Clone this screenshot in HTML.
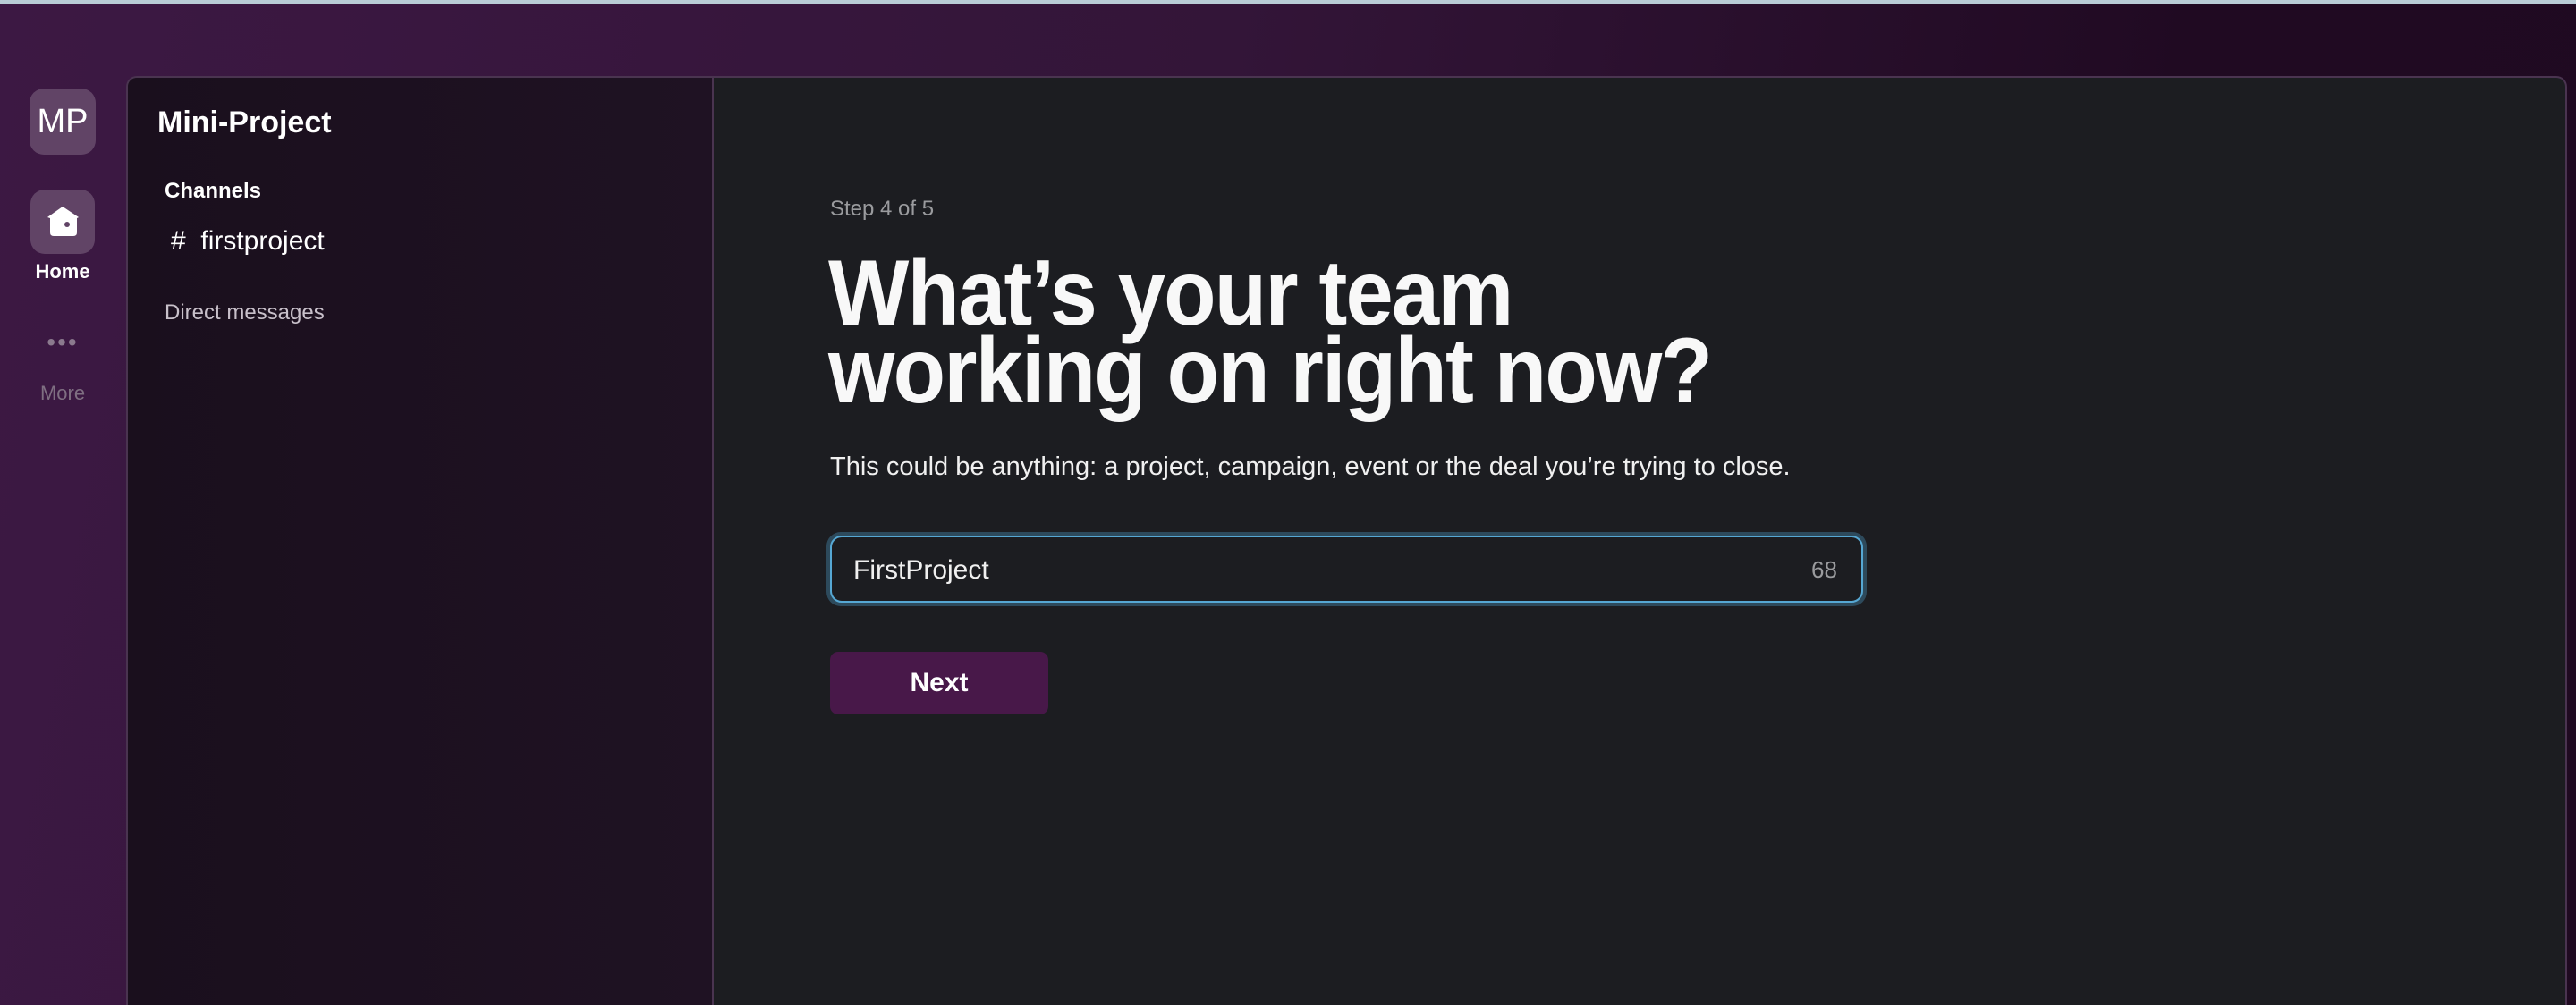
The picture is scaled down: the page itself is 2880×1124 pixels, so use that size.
<!DOCTYPE html>
<html><head><meta charset="utf-8"><style>
*{margin:0;padding:0;box-sizing:border-box}
html,body{width:2880px;height:1124px;overflow:hidden}
body{position:relative;font-family:"Liberation Sans",sans-serif;background:linear-gradient(100deg,#3c1843 0%,#331538 45%,#200a22 80%,#1f0a21 100%);}
.topline{position:absolute;left:0;top:0;width:2880px;height:4px;background:#b9ccd6}
.panel{position:absolute;left:141px;top:85px;width:2729px;height:1039px;border:2px solid #4a3450;border-bottom:none;border-radius:12px 12px 0 0;overflow:hidden;background:#1c1d21}
.side{position:absolute;left:0;top:0;width:655px;height:100%;background:linear-gradient(90deg,#1a0f1d,#1f1223);border-right:2px solid #4a3450}
.ws{position:absolute;left:33px;top:99px;width:74px;height:74px;border-radius:16px;background:#614466;color:#fff;font-size:38px;text-align:center;line-height:74px}
.home{position:absolute;left:34px;top:212px;width:72px;height:72px;border-radius:16px;background:#614466}
.lbl{position:absolute;width:140px;left:0;text-align:center;font-size:22px}
.t{position:absolute;white-space:nowrap}
</style></head><body>
<div class="topline"></div>
<div class="ws">MP</div>
<div class="home"><svg width="72" height="72" viewBox="0 0 72 72"><path d="M36 19 L54 31 L52 32 L52 48 Q52 52 48 52 L26 52 Q22 52 22 48 L22 32 L19 31 Z" fill="#fff"/><circle cx="41" cy="39" r="3" fill="#614466"/></svg></div>
<div class="lbl" style="top:291px;color:#fff;font-weight:bold">Home</div>
<div class="lbl" style="top:367px;color:#8b7a8e;font-size:28px;letter-spacing:2px">•••</div>
<div class="lbl" style="top:427px;color:#7f6f82">More</div>
<div class="panel">
 <div class="side">
  <div class="t" style="left:33px;top:31px;font-size:34px;font-weight:bold;color:#fff">Mini-Project</div>
  <div class="t" style="left:41px;top:113px;font-size:24px;font-weight:bold;color:#fff">Channels</div>
  <div class="t" style="left:48px;top:166px;font-size:30px;color:#fff">#&nbsp; firstproject</div>
  <div class="t" style="left:41px;top:249px;font-size:24px;color:#c8c0ca">Direct messages</div>
 </div>
 <div class="t" style="left:785px;top:133px;font-size:24px;color:#9a9b9e">Step 4 of 5</div>
 <div class="t" style="left:783px;top:198px;font-size:104px;font-weight:bold;color:#f8f8f8;line-height:87px;letter-spacing:-2px;transform:scaleX(0.92);transform-origin:left top">What’s your team<br>working on right now?</div>
 <div class="t" style="left:785px;top:419px;font-size:29px;color:#f0f0f0">This could be anything: a project, campaign, event or the deal you’re trying to close.</div>
 <div style="position:absolute;left:781px;top:508px;width:1163px;height:83px;border-radius:16px;background:#2d4a5c"></div>
 <div style="position:absolute;left:785px;top:512px;width:1155px;height:75px;border-radius:13px;background:#1c1d21;border:2px solid #56a8d4"></div>
 <div class="t" style="left:811px;top:534px;font-size:30px;color:#f0f0f0">FirstProject</div>
 <div class="t" style="left:1882px;top:535px;font-size:26px;color:#9a9b9e">68</div>
 <div style="position:absolute;left:785px;top:642px;width:244px;height:70px;border-radius:9px;background:#481849;color:#fff;font-weight:bold;font-size:30px;text-align:center;line-height:70px">Next</div>
</div>
</body></html>
